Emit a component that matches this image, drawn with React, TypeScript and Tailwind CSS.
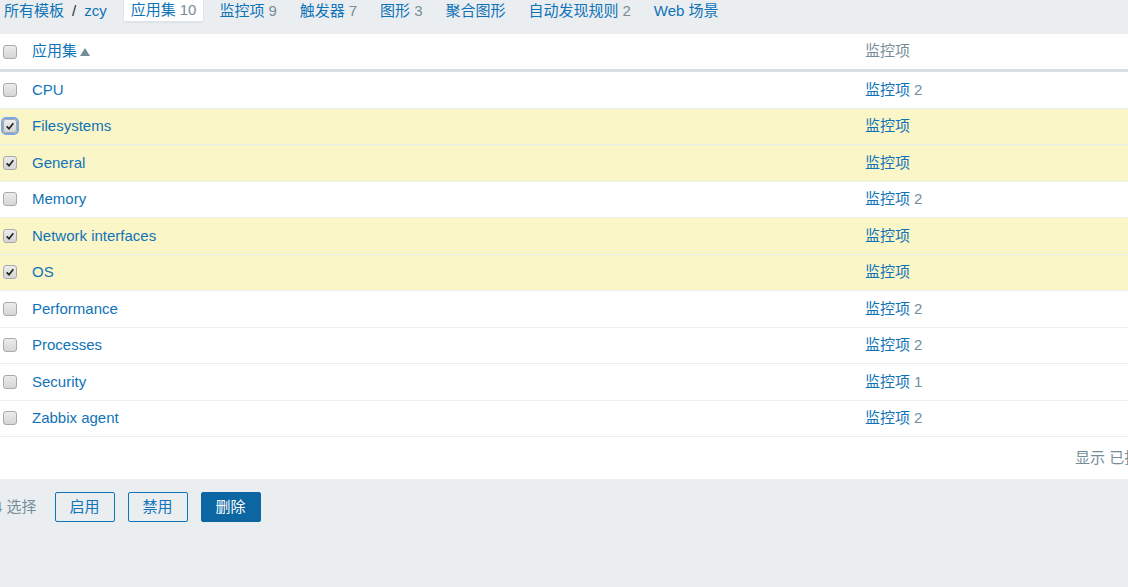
import React from 'react';

type Row = { name: string; count?: number; checked: boolean; focus?: boolean };

const rows: Row[] = [
  { name: 'CPU', count: 2, checked: false },
  { name: 'Filesystems', checked: true, focus: true },
  { name: 'General', checked: true },
  { name: 'Memory', count: 2, checked: false },
  { name: 'Network interfaces', checked: true },
  { name: 'OS', checked: true },
  { name: 'Performance', count: 2, checked: false },
  { name: 'Processes', count: 2, checked: false },
  { name: 'Security', count: 1, checked: false },
  { name: 'Zabbix agent', count: 2, checked: false },
];

const tabs = [
  { label: '监控项', count: 9 },
  { label: '触发器', count: 7 },
  { label: '图形', count: 3 },
  { label: '聚合图形' },
  { label: '自动发现规则', count: 2 },
  { label: 'Web 场景' },
];

const Check: React.FC<{ checked?: boolean; focus?: boolean }> = ({ checked, focus }) => (
  <span
    className={`relative flex h-[14px] w-[14px] items-center justify-center rounded-[3px] border border-[#a9a9a9] bg-gradient-to-b from-[#ececec] to-[#d6d6d6] ${
      focus ? 'outline outline-2 outline-[#7ea6e6]' : ''
    }`}
  >
    {checked && (
      <svg viewBox="0 0 12 12" className="h-[10px] w-[10px]">
        <path d="M2 6.5 L4.8 9.2 L10 2.6" fill="none" stroke="#222" strokeWidth="2" />
      </svg>
    )}
  </span>
);

const App: React.FC = () => {
  return (
    <div
      className="h-[587px] w-[1128px] overflow-hidden bg-[#ebeef0] text-[15px] text-[#1f2c33]"
      style={{ fontFamily: '"Liberation Sans", "Noto Sans CJK SC", sans-serif' }}
    >
      {/* tabs */}
      <div className="flex h-[34px] items-start pl-[4px]">
        <div className="flex h-[22px] items-center text-[#0f73b8]">
          <span>所有模板</span>
          <span className="mx-[8px] text-[#1f2c33]">/</span>
          <span>zcy</span>
        </div>
        <div className="ml-[16px] flex h-[22px] items-center rounded-b-[2px] border border-t-0 border-[#dfe4e7] bg-white px-[7px] text-[#0f73b8] shadow-[0_1px_1px_rgba(0,0,0,0.05)]">
          应用集<span className="ml-[4px] text-[#768d99]">10</span>
        </div>
        {tabs.map((t) => (
          <div key={t.label} className="ml-[7px] flex h-[22px] items-center px-[8px] text-[#0f73b8]">
            {t.label}
            {t.count !== undefined && <span className="ml-[4px] text-[#768d99]">{t.count}</span>}
          </div>
        ))}
      </div>

      {/* table */}
      <div className="bg-white">
        <div className="flex h-[38px] items-center border-b-[3px] border-[#dcdfe2]">
          <div className="flex w-[32px] justify-start pl-[3px]">
            <Check />
          </div>
          <div className="flex w-[833px] items-center text-[#0f73b8]">
            应用集
            <svg viewBox="0 0 10 8" className="ml-[3px] h-[8px] w-[10px]">
              <path d="M0 8 L5 0 L10 8 Z" fill="#768d99" />
            </svg>
          </div>
          <div className="text-[#768d99]">监控项</div>
        </div>
        {rows.map((r) => (
          <div
            key={r.name}
            className={`flex h-[36.5px] items-center border-b border-[#ebeef0] ${r.checked ? 'bg-[#fbf6c7]' : 'bg-white'}`}
          >
            <div className="flex w-[32px] justify-start pl-[3px]">
              <Check checked={r.checked} focus={r.focus} />
            </div>
            <div className="w-[833px] text-[#0f73b8]">{r.name}</div>
            <div className="text-[#0f73b8]">
              监控项
              {r.count !== undefined && <span className="ml-[4px] text-[#768d99]">{r.count}</span>}
            </div>
          </div>
        ))}
        <div className="flex h-[42px] items-center whitespace-nowrap pl-[1075px] text-[#768d99]">
          显示 已找到的10中的10
        </div>
      </div>

      {/* actions */}
      <div className="flex items-center pt-[13px]">
        <span className="ml-[-6px] text-[#768d99]">4 选择</span>
        <button className="ml-[18px] h-[30px] w-[60px] rounded-[2px] border border-[#0f73b8] bg-transparent text-[#0f73b8]">
          启用
        </button>
        <button className="ml-[13px] h-[30px] w-[60px] rounded-[2px] border border-[#0f73b8] bg-transparent text-[#0f73b8]">
          禁用
        </button>
        <button className="ml-[13px] h-[30px] w-[60px] rounded-[2px] border border-[#0b66a2] bg-[#0b66a2] text-white">
          删除
        </button>
      </div>
    </div>
  );
};

export default App;
